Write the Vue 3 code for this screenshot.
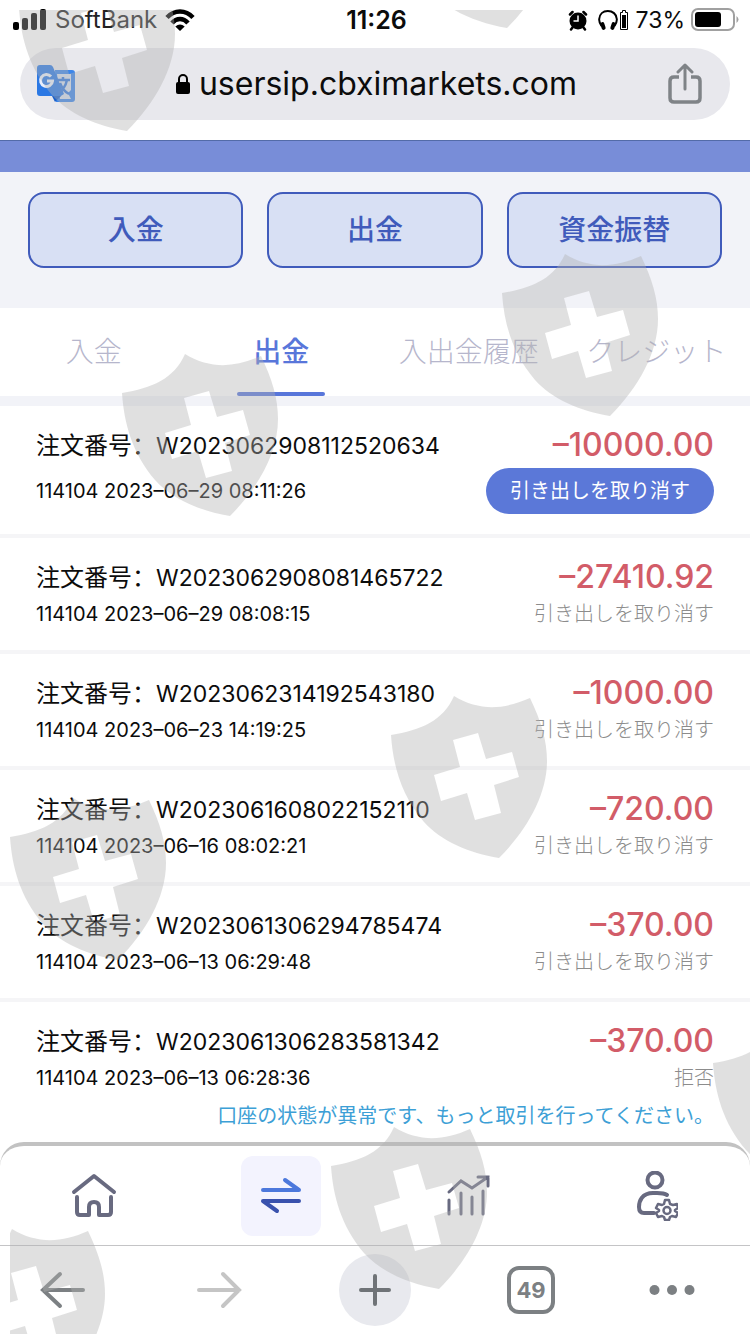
<script setup>
import { ref } from 'vue'

const actions = ['入金', '出金', '資金振替']
const tabs = ['入金', '出金', '入出金履歴', 'クレジット']
const activeTab = ref(1)
const address = ref('usersip.cbximarkets.com')

const cancelLabel = '引き出しを取り消す'
const orders = [
  { id: 'W2023062908112520634', time: '114104 2023–06–29 08:11:26', amount: '–10000.00', open: true },
  { id: 'W2023062908081465722', time: '114104 2023–06–29 08:08:15', amount: '–27410.92', status: cancelLabel },
  { id: 'W2023062314192543180', time: '114104 2023–06–23 14:19:25', amount: '–1000.00', status: cancelLabel },
  { id: 'W2023061608022152110', time: '114104 2023–06–16 08:02:21', amount: '–720.00', status: cancelLabel },
  { id: 'W2023061306294785474', time: '114104 2023–06–13 06:29:48', amount: '–370.00', status: cancelLabel },
  {
    id: 'W2023061306283581342',
    time: '114104 2023–06–13 06:28:36',
    amount: '–370.00',
    status: '拒否',
    note: '口座の状態が異常です、もっと取引を行ってください。'
  }
]

const shields = [
  [19, -32], [399, -135], [502, 253], [122, 353], [391, 695],
  [10, 797], [713, 1023], [331, 1126], [-51, 1228]
]
</script>

<template>
  <div class="screen">
    <header class="status">
      <div class="side">
        <svg class="signal" width="34" height="22" viewBox="0 0 34 22" aria-hidden="true">
          <rect x="0" y="13" width="6" height="8" rx="2" />
          <rect x="9" y="9" width="6" height="12" rx="2" />
          <rect x="18" y="4" width="6" height="17" rx="2" />
          <rect x="27" y="0" width="6" height="21" rx="2" />
        </svg>
        <span class="carrier">SoftBank</span>
        <svg width="30" height="22" viewBox="0 0 30 22" aria-hidden="true">
          <g fill="none" stroke="#000" stroke-width="4.500">
            <path d="M2 8.500C9.500 0.500 20.500 0.500 28 8.500" />
            <path d="M7 14C11.500 8.800 18.500 8.800 23 14" />
          </g>
          <path d="M10.300 17.500Q15 13.500 19.700 17.500L15 22Z" />
        </svg>
      </div>
      <time class="clock">11:26</time>
      <div class="side end">
        <svg width="20" height="21" viewBox="0 0 20 21" aria-hidden="true">
          <circle cx="10" cy="11" r="8.500" />
          <path d="M4.500 17.500L3 19.500M15.500 17.500l1.500 2M2 4.500l2.500-2.500M18 4.500l-2.500-2.500" stroke="#000" stroke-width="2.500" stroke-linecap="round" />
          <path d="M10 5.500V11H5.500" fill="none" stroke="#fff" stroke-width="1.500" />
        </svg>
        <svg class="phones" width="32" height="22" viewBox="0 0 32 22" aria-hidden="true">
          <path d="M3.500 17C1.500 14 1 12 1.200 10C1.500 5 5 2 9.800 2S18.500 5 18.800 10C19 12 18.500 14 16.500 17" fill="none" stroke="#000" stroke-width="2" />
          <rect x="3" y="13" width="4" height="8" rx="2" transform="rotate(-18 5 17)" />
          <rect x="13" y="13" width="4" height="8" rx="2" transform="rotate(18 15 17)" />
          <path d="M22.500 3.500h2v-2h3v2h2v17h-7z" fill="none" stroke="#000" />
          <rect x="24" y="6" width="4" height="13" />
        </svg>
        <span class="percent">73%</span>
        <svg width="49" height="24" viewBox="0 0 49 24" aria-hidden="true">
          <rect x="1" y="1" width="42" height="21" rx="6" fill="none" stroke="#a0a0a0" stroke-width="2" />
          <rect x="4" y="4" width="26" height="15" rx="3" />
          <path d="M45.500 8Q49.500 11.500 45.500 15Z" fill="#a0a0a0" />
        </svg>
      </div>
    </header>

    <div class="address-wrap">
      <div class="address">
        <button class="plain" aria-label="翻訳">
          <svg width="40" height="40" viewBox="0 0 40 40">
            <path d="M19 6h17a3 3 0 0 1 3 3v26a3 3 0 0 1-3 3H20z" fill="#3c86ea" />
            <path d="M21 10h14v16l-3 3 3 6H24z" fill="#d3dded" />
            <path d="M4 1h10q2 0 3 2l11 27-8 5-2-3H4q-3 0-3-3V4q0-3 3-3z" fill="#2b78e4" />
            <path d="M16 32h9l-6 6z" fill="#195fc9" />
            <path d="M15 12.500A6 6 0 1 0 16.500 17H11" fill="none" stroke="#e8eefb" stroke-width="3" />
            <path d="M21 16h13M27 13v3M31 16q-2 9-9 13M24 19q3 8 9 11" fill="none" stroke="#3478dd" stroke-width="2.500" />
          </svg>
        </button>
        <label class="url">
          <svg width="16" height="22" viewBox="0 0 16 22" aria-label="保護された通信">
            <rect x="1" y="9" width="14" height="12" rx="2" />
            <path d="M4 10V6a4 4 0 0 1 8 0v4" fill="none" stroke="#000" stroke-width="2" />
          </svg>
          <input v-model="address" type="text" aria-label="アドレス" />
        </label>
        <button class="plain" aria-label="共有">
          <svg width="34" height="42" viewBox="0 0 34 42" fill="none" stroke="#7f8387" stroke-width="3.500" stroke-linecap="round" stroke-linejoin="round">
            <path d="M11 14H6q-4 0-4 4v17q0 4 4 4h22q4 0 4-4V18q0-4-4-4h-5" stroke-linecap="butt" />
            <path d="M17 26V3M10 9l7-7 7 7" stroke-width="3" />
          </svg>
        </button>
      </div>
    </div>

    <div class="strip"></div>

    <section class="actions">
      <button v-for="a in actions" :key="a">{{ a }}</button>
    </section>

    <div class="tabs" role="tablist">
      <button
        v-for="(t, i) in tabs"
        :key="t"
        role="tab"
        :class="{ on: i === activeTab }"
        :aria-selected="i === activeTab"
        @click="activeTab = i"
      >{{ t }}</button>
    </div>

    <main>
      <ul class="orders">
        <li v-for="o in orders" :key="o.id" :class="{ open: o.open, noted: o.note }">
          <div class="line">
            <span class="order"><span class="label">注文番号：</span>{{ o.id }}</span>
            <strong>{{ o.amount }}</strong>
          </div>
          <div class="line meta">
            <span>{{ o.time }}</span>
            <button v-if="o.open" class="cancel">{{ cancelLabel }}</button>
            <span v-else class="state">{{ o.status }}</span>
          </div>
          <p v-if="o.note" class="note">{{ o.note }}</p>
        </li>
      </ul>
    </main>

    <nav class="site-nav">
      <a href="#home" aria-label="ホーム">
        <svg width="48" height="48" viewBox="0 0 48 48" fill="none" stroke="#686a80" stroke-width="4" stroke-linecap="round" stroke-linejoin="round">
          <path d="M4 20L24 4l20 16" />
          <path d="M7 25v15q0 3 3 3h9V35q0-5 5-5t5 5v8h9q3 0 3-3V25" />
        </svg>
      </a>
      <a href="#transfer" class="current" aria-label="入出金">
        <svg width="44" height="40" viewBox="0 0 44 40" fill="none" stroke-width="4" stroke-linecap="round" stroke-linejoin="round">
          <path d="M4 14H40L26 4" stroke="#4c78dc" />
          <path d="M40 25H4L18 35" stroke="#3951ad" />
        </svg>
      </a>
      <a href="#market" aria-label="マーケット">
        <svg width="46" height="44" viewBox="0 0 46 44" fill="none" stroke="#686a80" stroke-width="3" stroke-linecap="round">
          <path d="M3 26v14M15 19v21M26 23v17M37 17v23" />
          <path d="M3 18L15 7l11 7L42 3M32 3h10v9" />
        </svg>
      </a>
      <a href="#account" aria-label="アカウント">
        <svg width="44" height="50" viewBox="0 0 44 50" fill="none" stroke="#686a80" stroke-width="4" stroke-linecap="round">
          <circle cx="21" cy="9" r="7.500" />
          <path d="M33 24Q30 22 23 22H19C8 22 5 30 5 36q0 6 5 6h10" />
          <g stroke-width="2.500" stroke-linejoin="round">
            <path d="M31 29h4l1 4 3 1 4-1 1 4-3 2 0 1 3 2-2 4-4-1-2 1-1 3h-4l-1-3-2-1-4 1-2-4 3-2v-1l-3-2 2-4 4 1 2-1z" />
            <circle cx="33" cy="39.500" r="3.500" />
          </g>
        </svg>
      </a>
    </nav>

    <footer class="browser-nav">
      <button class="plain" aria-label="戻る">
        <svg width="46" height="38" viewBox="0 0 46 38" fill="none" stroke="#7c8083" stroke-width="4" stroke-linecap="round"><path d="M43 19H3M20 3L3 19l17 16" /></svg>
      </button>
      <button class="plain" aria-label="進む">
        <svg width="46" height="38" viewBox="0 0 46 38" fill="none" stroke="#c5c5c5" stroke-width="4" stroke-linecap="round"><path d="M3 19h40M27 3l16 16-16 16" /></svg>
      </button>
      <button class="plain" aria-label="新しいタブ">
        <span class="plus"><svg width="32" height="32" viewBox="0 0 32 32" stroke="#6f7377" stroke-width="4" stroke-linecap="round"><path d="M2 16h28M16 2v28" /></svg></span>
      </button>
      <button class="plain" aria-label="タブ一覧"><span class="count">49</span></button>
      <button class="plain" aria-label="メニュー">
        <svg width="46" height="12" viewBox="0 0 46 12" fill="#7c8083"><circle cx="5.500" cy="6" r="5" /><circle cx="23" cy="6" r="5" /><circle cx="40.500" cy="6" r="5" /></svg>
      </button>
    </footer>

    <svg class="shields" aria-hidden="true">
      <defs>
        <clipPath id="edge"><rect x="10" y="10" width="100%" height="100%" /></clipPath>
      </defs>
      <g clip-path="url(#edge)">
        <path
          v-for="(s, i) in shields"
          :key="i"
          :transform="`translate(${s[0]} ${s[1]})`"
          fill-rule="evenodd"
          d="M0 40C30 35 52 26 63 1C88 16 112 15 139 3C150 26 156 45 156 66C156 100 136 135 108 163C78 158 50 146 33 127C10 100 2 70 0 40ZM62 45L87 38 95 64 121 57 128 82 103 90 110 118 84 125 76 98 50 106 43 80 69 72Z"
        />
      </g>
    </svg>
  </div>
</template>

<style>
body {
  background: #fff;
}
</style>

<style scoped>
.screen {
  position: relative;
  overflow: hidden;
  display: flex;
  flex-direction: column;
  min-height: 100vh;
  color: #0c0c0c;
  font-family: Inter, "Noto Sans CJK JP", sans-serif;
}
svg {
  display: block;
  flex: none;
}
button,
input {
  margin: 0;
  padding: 0;
  border: 0;
  background: none;
  color: inherit;
  font: inherit;
}
.shields {
  position: absolute;
  inset: 0;
  width: 100%;
  height: 100%;
  fill: rgba(178, 178, 178, 0.4);
  pointer-events: none;
}
.status {
  display: flex;
  align-items: center;
  height: 40px;
  padding: 0 10px 0 13px;
}
.side {
  display: flex;
  flex: 1;
  align-items: center;
  gap: 8px;
}
.end {
  justify-content: flex-end;
  gap: 6px;
}
.carrier {
  color: #222;
  font-size: 24px;
  line-height: 32px;
}
.percent {
  font-size: 23px;
  line-height: 32px;
}
.phones {
  margin-left: 4px;
}
.clock {
  font-size: 25px;
  font-weight: 600;
  line-height: 32px;
}
.address-wrap {
  padding: 8px 20px 20px;
}
.address {
  display: flex;
  align-items: center;
  justify-content: space-between;
  height: 72px;
  padding: 0 28px 0 16px;
  border-radius: 36px;
  background: #e8e8ed;
}
.plain {
  display: grid;
  place-items: center;
}
.url {
  display: flex;
  align-items: center;
  gap: 8px;
  padding-left: 8px;
}
.url input {
  field-sizing: content;
  font-size: 32px;
  line-height: 40px;
  outline: none;
}
.strip {
  height: 31px;
  border-top: 1px solid #536ba8;
  background: #788dd8;
}
.actions {
  display: grid;
  grid-template-columns: repeat(3, 1fr);
  gap: 24px;
  padding: 20px 28px 40px;
  background: #f2f3f8;
}
.actions button {
  height: 76px;
  border: 2px solid #405bbb;
  border-radius: 16px;
  background: #d8e0f4;
  color: #405bbb;
  font-size: 28px;
  font-weight: 500;
  line-height: 32px;
}
.tabs {
  display: grid;
  grid-template-columns: repeat(4, 1fr);
  border-bottom: 10px solid #f2f3f8;
}
.tabs button {
  position: relative;
  height: 88px;
  color: #b6b6cc;
  font-size: 28px;
  font-weight: 300;
  line-height: 32px;
  white-space: nowrap;
}
.tabs .on {
  color: #5876da;
  font-weight: 500;
}
.tabs .on::after {
  content: "";
  position: absolute;
  bottom: 0;
  left: 50%;
  width: 88px;
  height: 4px;
  margin-left: -44px;
  border-radius: 2px;
  background: #5876da;
}
main {
  flex: 1;
}
.orders {
  margin: 0;
  padding: 0;
  list-style: none;
}
.orders li {
  padding: 18px 36px 20px;
}
.orders li.open {
  padding-bottom: 18px;
}
.orders li.noted {
  padding-bottom: 4px;
}
.orders li + li {
  border-top: 4px solid #f5f5f7;
}
.line {
  display: flex;
  align-items: center;
  justify-content: space-between;
  height: 42px;
  line-height: 24px;
}
.order {
  font-size: 23px;
}
.label {
  font-family: "Noto Sans CJK SC", sans-serif;
  font-size: 24px;
}
.line strong {
  color: #d25c68;
  font-size: 32px;
  font-weight: 500;
}
.meta {
  height: 32px;
  font-size: 20px;
}
.open .meta {
  height: 50px;
}
.state {
  color: #8c8c8c;
  font-weight: 300;
}
.cancel {
  height: 46px;
  padding: 0 24px;
  border-radius: 23px;
  background: #5b78d8;
  color: #fff;
}
.note {
  margin: 0;
  color: #3d9fd6;
  font-size: 20px;
  line-height: 44px;
  text-align: right;
}
.site-nav {
  display: grid;
  grid-template-columns: repeat(4, 1fr);
  align-items: center;
  justify-items: center;
  height: 99px;
  border-top: 4px solid #c2c2c2;
  border-radius: 24px 24px 0 0;
}
.site-nav a {
  display: grid;
  place-items: center;
  width: 80px;
  height: 80px;
  border-radius: 12px;
}
.site-nav .current {
  background: #f3f3fe;
}
.browser-nav {
  display: grid;
  grid-template-columns: 21fr 31fr 21fr 31fr 21fr;
  align-items: center;
  height: 88px;
  border-top: 1px solid #c4c4c6;
}
.browser-nav .plain:last-child {
  padding-right: 30px;
}
.plus {
  display: grid;
  place-items: center;
  width: 72px;
  height: 72px;
  border-radius: 50%;
  background: #e8e9ee;
}
.count {
  display: grid;
  place-items: center;
  box-sizing: border-box;
  width: 48px;
  height: 48px;
  border: 4px solid #7c8083;
  border-radius: 12px;
  color: #7c8083;
  font-size: 22px;
  font-weight: 700;
}
</style>
